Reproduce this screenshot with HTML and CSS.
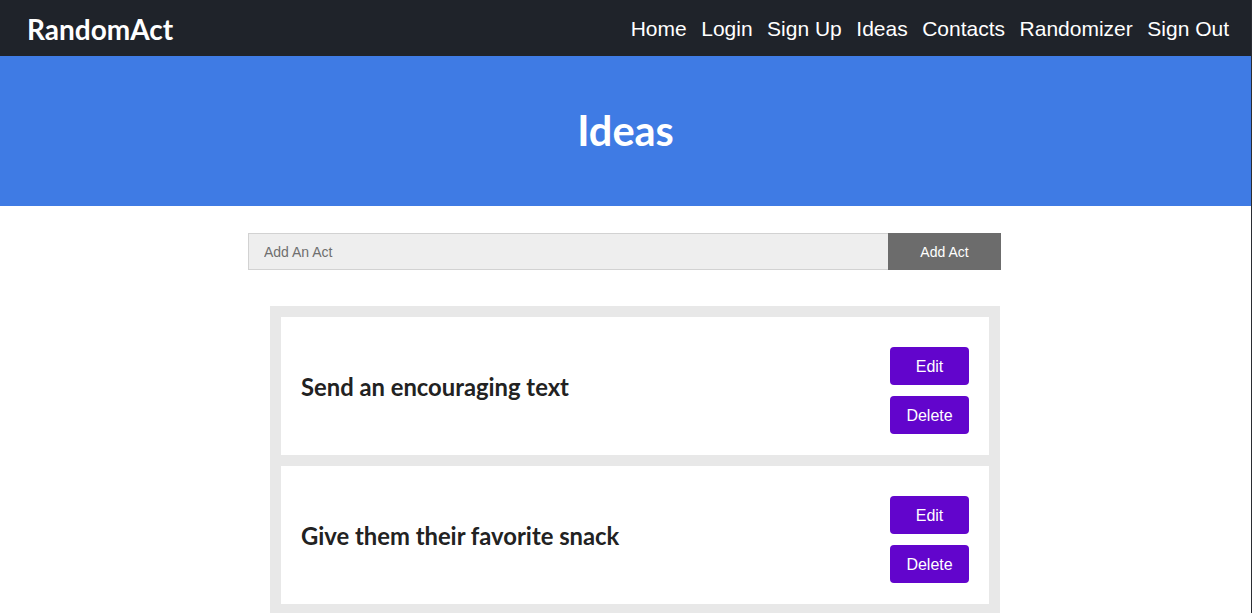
FILE: index.html
```html
<!DOCTYPE html>
<html>
<head>
<meta charset="utf-8">
<title>RandomAct</title>
<link rel="stylesheet" href="styles.css">
</head>
<body>
<div class="page">
  <nav class="navbar">
    <a class="brand" href="#">RandomAct</a>
    <ul class="nav-links">
      <li><a href="#">Home</a></li>
      <li><a href="#">Login</a></li>
      <li><a href="#">Sign Up</a></li>
      <li><a href="#">Ideas</a></li>
      <li><a href="#">Contacts</a></li>
      <li><a href="#">Randomizer</a></li>
      <li><a href="#">Sign Out</a></li>
    </ul>
  </nav>
  <header class="hero">
    <h1>Ideas</h1>
  </header>
  <main class="content">
    <form class="add-form">
      <input class="add-input" type="text" placeholder="Add An Act">
      <button class="add-btn" type="button">Add Act</button>
    </form>
    <div class="act-list">
      <div class="act-card">
        <h2 class="act-title">Send an encouraging text</h2>
        <div class="act-actions">
          <button class="act-btn" type="button">Edit</button>
          <button class="act-btn" type="button">Delete</button>
        </div>
      </div>
      <div class="act-card">
        <h2 class="act-title">Give them their favorite snack</h2>
        <div class="act-actions">
          <button class="act-btn" type="button">Edit</button>
          <button class="act-btn" type="button">Delete</button>
        </div>
      </div>
    </div>
  </main>
</div>
</body>
</html>
```
FILE: styles.css
```css
html {
  background: #2b2d33;
  height: 100%;
}
body {
  margin: 0;
  height: 100%;
  overflow: hidden;
  font-family: "Liberation Sans", Arial, sans-serif;
}
.page {
  width: 1251px;
  min-height: 100%;
  background: #ffffff;
}
.navbar {
  height: 56px;
  background: #1f232a;
  display: flex;
  align-items: center;
  justify-content: space-between;
  padding: 2px 22px 0 27px;
  box-sizing: border-box;
}
.brand {
  font-family: Lato, "Noto Sans", sans-serif;
  font-weight: 700;
  font-size: 28px;
  color: #ffffff;
  text-decoration: none;
}
.nav-links {
  list-style: none;
  margin: 0;
  padding: 0;
  display: flex;
  gap: 14.5px;
}
.nav-links a {
  color: #ffffff;
  text-decoration: none;
  font-size: 21px;
}
.hero {
  height: 150px;
  background: #3f7be4;
  display: flex;
  align-items: center;
  justify-content: center;
}
.hero h1 {
  margin: 0 0 2px 0;
  font-family: Lato, "Noto Sans", sans-serif;
  font-weight: 700;
  font-size: 41.5px;
  color: #ffffff;
}
.content {
  width: 753px;
  margin-left: 248px;
  padding-top: 27px;
}
.add-form {
  display: flex;
  margin: 0;
}
.add-input {
  flex: 1;
  height: 37px;
  box-sizing: border-box;
  background: #eeeeee;
  border: 1px solid #d2d2d2;
  border-right: none;
  padding: 0 15px;
  font-family: "Liberation Sans", Arial, sans-serif;
  font-size: 14px;
  color: #333;
  outline: none;
}
.add-input::placeholder {
  color: #6f6f6f;
}
.add-btn {
  width: 113px;
  height: 37px;
  border: none;
  background: #6c6c6c;
  color: #ffffff;
  font-family: "Liberation Sans", Arial, sans-serif;
  font-size: 14px;
  padding: 0;
}
.act-list {
  margin: 36px 1px 0 22px;
  background: #e8e8e8;
  padding: 11px 11px 9px 11px;
  display: flex;
  flex-direction: column;
  gap: 11px;
}
.act-card {
  background: #ffffff;
  height: 138px;
  box-sizing: border-box;
  padding: 0 20px;
  display: flex;
  align-items: center;
  justify-content: space-between;
}
.act-title {
  margin: 1px 0 0 0;
  font-family: Lato, "Noto Sans", sans-serif;
  font-weight: 700;
  font-size: 23.8px;
  color: #222222;
}
.act-actions {
  display: flex;
  flex-direction: column;
  gap: 11px;
  margin-top: 9px;
}
.act-btn {
  width: 79px;
  height: 38px;
  border: none;
  border-radius: 4px;
  background: #6205cc;
  color: #ffffff;
  font-family: "Liberation Sans", Arial, sans-serif;
  font-size: 16px;
  padding: 1px 0 0 0;
}
```
